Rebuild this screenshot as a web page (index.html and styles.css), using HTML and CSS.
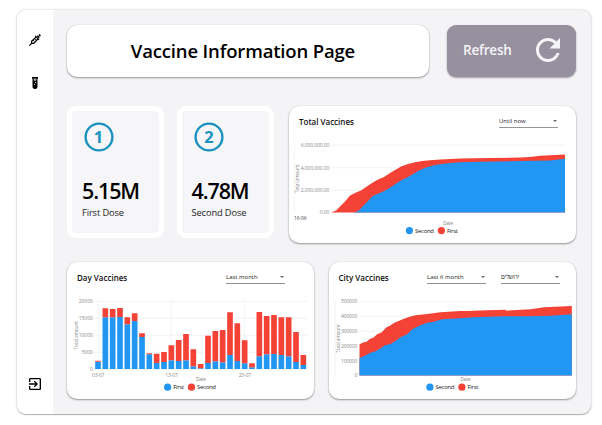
FILE: index.html
```html
<!DOCTYPE html>
<html lang="en">
<head>
<meta charset="utf-8">
<title>Vaccine Information Page</title>
<link rel="stylesheet" href="styles.css">
</head>
<body>
<div class="app">
  <nav class="sidebar">
    <svg class="icon-syringe" viewBox="0 0 12 12">
      <path d="M.3 11.7 3 9M8 1.7l2.3 2.3M9.2 2.8 11 1M10.1.4l1.5 1.5M6.2 1.9l3.9 3.9" fill="none" stroke="#000" stroke-width="1.1"/>
      <path d="m7.2 3-4.6 4.3.1 2 2 .1L9 4.8" fill="none" stroke="#000" stroke-width="1.3"/>
      <path d="m4 6 1.3 1.3M5.5 4.6l1.3 1.3" stroke="#000" stroke-width=".9"/>
    </svg>
    <svg class="icon-tube" viewBox="0 0 6 12">
      <path d="M0 0h6v1.5h-.5v8a2.5 2.5 0 0 1-5 0v-8H0z"/>
      <path d="M1.7 1.6h2.6v2.2H1.7z" fill="#aaa"/>
      <circle cx="3.6" cy="5.5" r=".6" fill="#fff"/><circle cx="2.4" cy="7.5" r=".5" fill="#fff"/>
    </svg>
    <svg class="icon-exit" viewBox="3 3 18 18"><path d="M10.09 15.59 11.5 17l5-5-5-5-1.41 1.41L12.67 11H3v2h9.67l-2.58 2.59zM19 3H5c-1.11 0-2 .9-2 2v4h2V5h14v14H5v-4H3v4c0 1.1.89 2 2 2h14c1.1 0 2-.9 2-2V5c0-1.1-.9-2-2-2z"/></svg>
  </nav>
  <main class="content">
    <div class="row row-top">
      <header class="card banner"><h1>Vaccine Information Page</h1></header>
      <button class="refresh"><span>Refresh</span>
        <svg viewBox="4 4 16 16"><path fill="#f5f4f7" d="M17.65 6.35C16.2 4.9 14.21 4 12 4c-4.42 0-7.99 3.58-7.99 8s3.57 8 7.99 8c3.73 0 6.84-2.55 7.73-6h-2.08c-.82 2.33-3.04 4-5.65 4-3.31 0-6-2.69-6-6s2.69-6 6-6c1.66 0 3.14.69 4.22 1.78L13 11h7V4l-2.35 2.35z"/></svg>
      </button>
    </div>
    <div class="row row-mid">
      <section class="dose">
        <svg viewBox="0 0 30 30"><circle cx="15" cy="15" r="13.4"/><text x="14.4" y="21">1</text></svg>
        <strong>5.15M</strong><span>First Dose</span>
      </section>
      <section class="dose">
        <svg viewBox="0 0 30 30"><circle cx="15" cy="15" r="13.4"/><text x="15" y="21">2</text></svg>
        <strong>4.78M</strong><span>Second Dose</span>
      </section>
      <section class="card panel total">
        <div class="panel-head"><h2>Total Vaccines</h2><div class="select">Until now</div></div>
        <svg class="chart" viewBox="289 136 287 107">
          <path class="grid" d="M331 145.2h234M331 167.7h234M331 190.2h234M294.3 145v67"/>
          <path class="first" d="M331 212.6 336 210.5 340 206.5 345 201.5 350 195.5 356 192.5 361 190.5 366 187 372 183 378 179.5 384 177 390 173 396 169.5 401 166.5 408 164 415 162.3 422 161 430 160.3 440 159.6 460 158.6 490 158 520 157.6 530 157 540 155.7 565 154.6V212.6z"/>
          <path class="second" d="M354 212.6 359 210.5 363 206 368 201 372 196.5 375 195 382 192 388 189 394 185 400 181 408 177 414 173.5 420 170 426 167.5 433 165.5 440 164.2 448 163.3 460 162.3 480 161.7 520 161 550 160.5 565 158.8V212.6z"/>
          <g class="axis end">
            <text x="329.3" y="146.9" textLength="28.5">6,000,000.00</text><text x="329.3" y="169.5" textLength="28.5">4,000,000.00</text><text x="329.3" y="192" textLength="28.5">2,000,000.00</text><text x="329.3" y="214.4" textLength="9.5">0.00</text>
          </g>
          <g class="axis mid"><text transform="translate(299 178.7) rotate(-90)" textLength="28.5">Total amount</text><text x="448" y="224.5" textLength="10">Date</text></g>
          <text class="dark" x="294" y="220.2" textLength="12.5">16-06</text>
          <g class="legend"><circle class="second" cx="409.4" cy="230.6" r="3.6"/><text x="415" y="232.8" textLength="19">Second</text><circle class="first" cx="441.4" cy="230.6" r="3.6"/><text x="447" y="232.8" textLength="11">First</text></g>
        </svg>
      </section>
    </div>
    <div class="row row-low">
      <section class="card panel day">
        <div class="panel-head"><h2>Day Vaccines</h2><div class="select">Last month</div></div>
        <svg class="chart" viewBox="67 292 247 107">
          <path class="grid" d="M94 301.3h213M94 318.3h213M94 335.3h213M94 352.3h213M94 369.3h213M98.2 301v68M171.3 301v68M244.7 301v68"/>
          <g transform="translate(60 255) scale(.33333)" fill="none" stroke-width="17">
            <path stroke="#2196f3" d="M114 342V320M136 342V187M158 342V187M180 342V186M202 342V208M224 342V198M246 342V246M268 342V298M290 342V324M312 342V321M334 342V316M356 342V318M378 342V316M400 342V334M422 342V340M444 342V324M466 342V319M488 342V322M510 342V300M532 342V318M554 342V325M576 342V337M598 342V304M620 342V298M642 342V297M664 342V300M686 342V304M708 342V321M730 342V330"/>
            <path stroke="#f44336" d="M114 320V317M136 187V160M158 187V162M180 186V159M202 208V187M224 198V175M246 246V235M268 298V295M290 324V296M312 321V291M334 316V271M356 318V255M378 316V237M400 334V283M422 340V327M444 324V242M466 319V228M488 322V225M510 300V172M532 318V205M554 325V256M576 337V325M598 304V171M620 298V183M642 297V180M664 300V187M686 304V187M708 321V231M730 330V300"/>
          </g>
          <g class="axis end"><text x="92.8" y="303.2" textLength="14">20000</text><text x="92.8" y="320.1" textLength="14">15000</text><text x="92.8" y="337.1" textLength="14">10000</text><text x="92.8" y="354" textLength="11">5000</text><text x="92.8" y="371">0</text></g>
          <g class="axis mid"><text x="98.2" y="376.7" textLength="12.5">03-07</text><text x="171.5" y="376.7" textLength="12.5">13-07</text><text x="244.9" y="376.7" textLength="12.5">23-07</text><text x="201" y="381" textLength="10">Date</text><text transform="translate(77.7 335.2) rotate(-90)" textLength="28.5">Total amount</text></g>
          <g class="legend"><circle class="second" cx="167.6" cy="387.2" r="3.6"/><text x="173.2" y="389.4" textLength="11">First</text><circle class="first" cx="191.5" cy="387.2" r="3.6"/><text x="197" y="389.4" textLength="19">Second</text></g>
        </svg>
      </section>
      <section class="card panel city">
        <div class="panel-head"><h2>City Vaccines</h2><div class="select">Last 6 month</div><div class="select">ירושלים</div></div>
        <svg class="chart" viewBox="328.5 292 247.5 107">
          <path class="grid" d="M359 301.3h212.5M359 316.3h212.5M359 331.2h212.5M359 346.2h212.5M334.6 301v74"/>
          <g transform="translate(320 255) scale(.33333)">
            <path class="first" d="M117 268 130 262 138 260 148 252 158 248 170 238 184 232 196 218 208 212 222 203 236 197 250 191 265 186 285 181 320 177 360 172 420 168 440 168 500 166 555 164 558 167 630 163 670 157 754 153V361.5H117z"/>
            <path class="second" d="M117 309 130 304 150 293 165 289 180 280 194 271 210 267 225 258 240 247 260 238 275 223 300 211 320 203 340 200 365 193 420 190 460 187 550 184 620 184 690 182 754 178V361.5H117z"/>
          </g>
          <g class="axis end"><text x="356.8" y="303.2" textLength="16.3">500000</text><text x="356.8" y="318.1" textLength="16.3">400000</text><text x="356.8" y="333" textLength="16.3">300000</text><text x="356.8" y="347.9" textLength="16.3">200000</text><text x="356.8" y="362.8" textLength="16.3">100000</text><text x="356.8" y="377.3">0</text></g>
          <g class="axis mid"><text x="465" y="381" textLength="10">Date</text><text transform="translate(339.2 338.5) rotate(-90)" textLength="28.5">Total amount</text></g>
          <g class="legend"><circle class="second" cx="429.4" cy="387.2" r="3.6"/><text x="435" y="389.4" textLength="19">Second</text><circle class="first" cx="461.4" cy="387.2" r="3.6"/><text x="467" y="389.4" textLength="11">First</text></g>
        </svg>
      </section>
    </div>
  </main>
</div>
</body>
</html>
```

FILE: styles.css
```css
* { box-sizing: border-box; }
body { margin: 0; height: 425px; padding: 10px 0 0 17px; background: #fff; font-family: "Open Sans", "Noto Sans", sans-serif; color: #000; overflow: hidden; }
svg { display: block; flex: none; }
.app { width: 574px; height: 404px; display: flex; background: #f4f4f7; border-radius: 9px; overflow: hidden; box-shadow: 0 0 2px rgba(0,0,0,.3), 0 1px 1px rgba(0,0,0,.25); }
.sidebar { width: 36px; background: #fff; display: flex; flex-direction: column; align-items: center; padding: 24px 0 24px; }
.icon-syringe { width: 12px; height: 12px; }
.icon-tube { width: 6px; height: 12px; margin-top: 31px; }
.icon-exit { width: 12px; height: 12px; margin-top: auto; }
.content { flex: 1; padding: 15px 15px 0 14px; }
.row { display: flex; }
.row-top { height: 52px; justify-content: space-between; }
.row-mid { height: 137px; margin-top: 29px; align-items: flex-start; }
.row-low { height: 137px; margin-top: 19px; justify-content: space-between; }
.card { background: #fff; border-radius: 10px; box-shadow: 0 1px 2px rgba(0,0,0,.38), 0 0 1px rgba(0,0,0,.2); }
.banner { width: 362px; display: flex; align-items: center; justify-content: center; padding-right: 10px; }
h1 { margin: 0; font-size: 18.5px; line-height: 26px; font-weight: 600; white-space: nowrap; letter-spacing: -.16px; }
.refresh { width: 129px; border: 0; border-radius: 9px; background: #96909f; color: #f5f4f7; display: flex; justify-content: space-between; align-items: center; padding: 0 16px 2px; font: 600 13.5px "Open Sans", sans-serif; letter-spacing: -.2px; box-shadow: 0 1px 2px rgba(0,0,0,.35); }
.refresh svg { width: 24px; height: 24px; }
.dose { width: 97px; height: 132px; margin-right: 12.5px; border: 5px solid #fff; border-radius: 9px; background: #f6f6f9; display: flex; flex-direction: column; align-items: flex-start; padding: 11px 0 0 10px; }
.dose svg { width: 30px; height: 30px; margin-left: 2px; }
.dose circle { fill: none; stroke: #1c92be; stroke-width: 2.4; }
.dose text { fill: #1c92be; font: 700 16.5px "Open Sans", sans-serif; text-anchor: middle; }
.dose strong { font-size: 21.5px; line-height: 26px; font-weight: 600; letter-spacing: -1.1px; margin-top: 26px; }
.dose span { font-size: 9.3px; line-height: 13px; letter-spacing: -.12px; color: #222; margin-top: 1.5px; }
.panel { display: flex; flex-direction: column; }
.panel-head { height: 30px; flex: none; display: flex; align-items: flex-start; padding: 9px 16px 0 10px; }
h2 { margin: 0; font-size: 8px; line-height: 14px; font-weight: 600; white-space: nowrap; flex: 1; color: #111; }
.select { width: 59px; height: 13px; padding-top: 2px; border-bottom: 1px solid #949494; font-size: 6px; line-height: 9px; color: #222; display: flex; justify-content: space-between; white-space: nowrap; }
.select::after { content: ""; border: 2px solid transparent; border-top: 2.5px solid #666; border-bottom: 0; margin: 3px 1px 0 0; height: 0; }
.chart { width: 100%; height: 107px; }
.total { width: 287px; height: 137px; margin-left: 3px; }
.total .panel-head { padding-right: 18px; }
.day { width: 247px; }
.city { width: 247.5px; }
.day .panel-head { padding-right: 29px; }
.city .panel-head { gap: 15px; }
.first { fill: #f44336; }
.second { fill: #2196f3; }
.grid { fill: none; stroke: #efefef; stroke-width: .8; }
.axis text { font-size: 5px; fill: #888; }
.end text { text-anchor: end; }
.mid text { text-anchor: middle; }
.dark { font-size: 5px; fill: #444; }
.legend text { font-size: 6px; fill: #222; }
```
